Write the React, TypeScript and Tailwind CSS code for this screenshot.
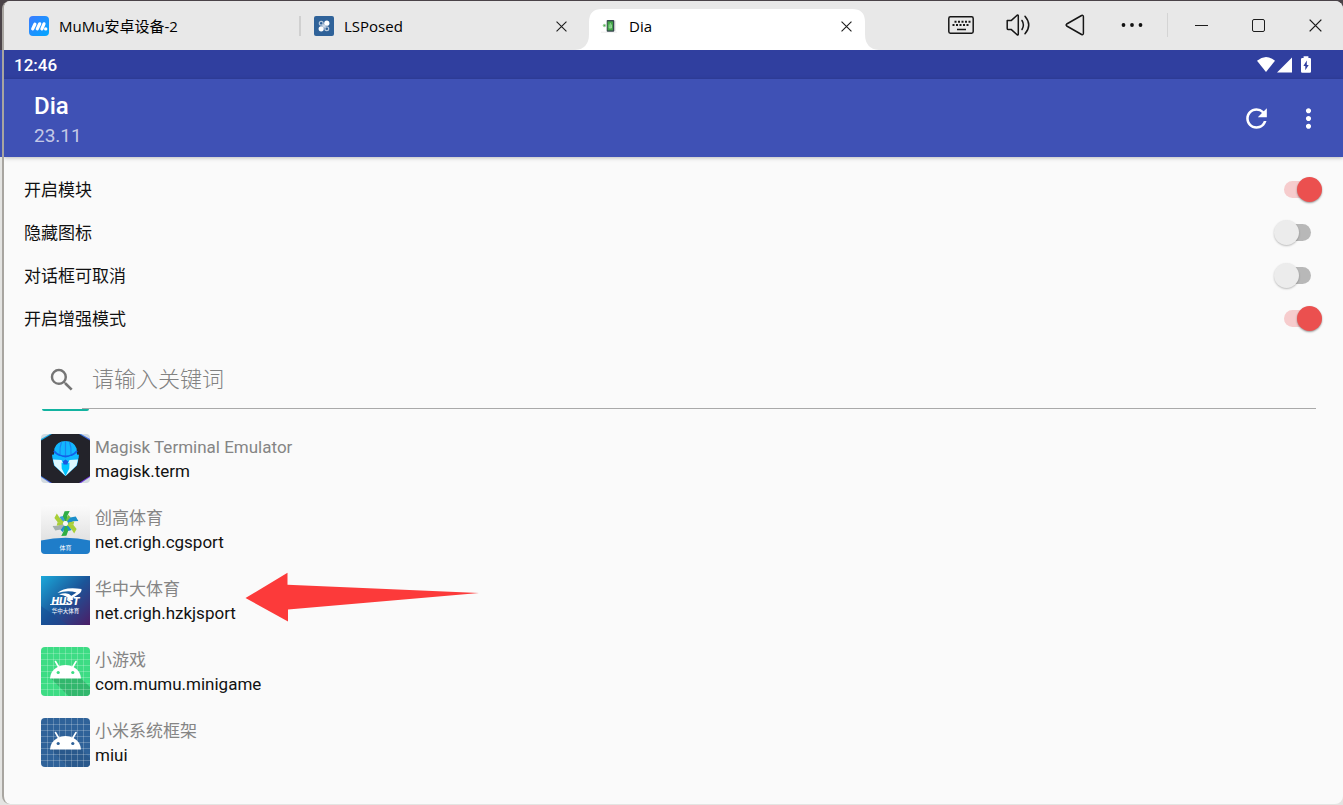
import { useState } from "react";
import type { ReactNode } from "react";
import { MdMoreVert, MdRefresh, MdSearch } from "react-icons/md";

function MuMuLogo() {
  return (
    <svg viewBox="0 0 20 20" className="size-5 shrink-0" aria-hidden="true">
      <defs>
        <linearGradient id="mumu" x1="0" y1="0" x2="1" y2="1">
          <stop offset="0" stopColor="#3d7bff" />
          <stop offset="1" stopColor="#00a8ff" />
        </linearGradient>
      </defs>
      <rect width="20" height="20" rx="4" fill="url(#mumu)" />
      <path d="M3.7 12.9 5.9 8.2M8.3 12.9 10.700 7.8M12.900 12.900 15 7.800" stroke="#fff" strokeWidth="3.200" strokeLinecap="round" />
      <circle cx="16.700" cy="12.900" r="1.700" fill="#fff" />
    </svg>
  );
}

function LSPosedLogo() {
  return (
    <svg viewBox="0 0 20 20" className="size-5 shrink-0" aria-hidden="true">
      <rect width="20" height="20" rx="2" fill="#2f6299" />
      <circle cx="7.200" cy="7.200" r="1.900" fill="#2f6299" stroke="#b9cadd" strokeWidth="1.200" />
      <circle cx="12.800" cy="12.800" r="1.900" fill="#2f6299" stroke="#b9cadd" strokeWidth="1.200" />
      <circle cx="7.200" cy="12.800" r="2.600" fill="#fff" />
      <circle cx="12.800" cy="7.200" r="2.600" fill="#fff" />
      <path d="M7.700 10 10 7.700 12.300 10 10 12.300z" fill="#ccd8e5" />
    </svg>
  );
}

function DiaLogo() {
  return (
    <svg viewBox="0 0 20 20" className="size-5 shrink-0" aria-hidden="true">
      <rect x="2" y="15.600" width="16" height="1.400" fill="#f3f3f3" />
      <circle cx="5.400" cy="9.500" r="1.700" fill="#a5d6a7" />
      <circle cx="5.400" cy="9.500" r=".7" fill="#4caf50" />
      <path d="M15 4.500h1.600v10.800h-1.600z" fill="#dedede" />
      <rect x="7.700" y="4" width="7.500" height="11.700" rx=".8" fill="#37474f" />
      <rect x="8.600" y="5.400" width="5.300" height="9" fill="#43a847" />
      <path d="M11.300 7v5M10.200 8.500v3.500h2.300V8.500" stroke="#a5e0a8" strokeWidth=".8" fill="none" />
    </svg>
  );
}

function Cross({ className }: { className: string }) {
  return (
    <svg viewBox="0 0 12 12" className={className} fill="none" stroke="#1d1d1d" strokeWidth="1.2" aria-hidden="true">
      <path d="M.6.6 11.4 11.4M11.4.6.6 11.4" />
    </svg>
  );
}

function KeyboardIcon() {
  return (
    <svg viewBox="0 0 26 18" className="h-[18px] w-[26px]" fill="none" stroke="#161616" aria-hidden="true">
      <rect x=".8" y=".8" width="24.4" height="16.4" rx="1.6" strokeWidth="1.5" />
      <path d="M6.500 5.700h16.500M4.500 9h16.500" strokeWidth="1.900" strokeDasharray="2 1.500" />
      <path d="M9 13.500h9" strokeWidth="1.500" />
    </svg>
  );
}

function SpeakerIcon() {
  return (
    <svg viewBox="0 0 24 22" className="h-[22px] w-6" fill="none" stroke="#161616" strokeWidth="1.5" strokeLinejoin="round" strokeLinecap="round" aria-hidden="true">
      <path d="M1.200 6.600h3.900l6-5.400q1.200-.6 1.200.7v18.200q0 1.300-1.200.7l-6-5.400H2q-.8 0-.8-.8z" />
      <path d="M16 6.500q2.800 4.500 0 9M19 2.200q7.500 8.800 0 17.600" />
    </svg>
  );
}

function BackIcon() {
  return (
    <svg viewBox="0 0 20 22" className="h-[22px] w-5" fill="none" stroke="#161616" strokeWidth="1.5" strokeLinejoin="round" aria-hidden="true">
      <path d="M1.7 10 16.6 1.5q1.8-.6 1.8 1.2v16.6q0 1.8-1.8 1.2L1.7 12Q.6 11 1.7 10z" />
    </svg>
  );
}

function EllipsisIcon() {
  return (
    <svg viewBox="0 0 22 6" className="h-1.5 w-[22px]" fill="#111" aria-hidden="true">
      <circle cx="2.5" cy="3" r="1.9" />
      <circle cx="11" cy="3" r="1.9" />
      <circle cx="19.5" cy="3" r="1.9" />
    </svg>
  );
}

function StatusIcons() {
  return (
    <svg viewBox="0 0 54 18" className="h-[18px] w-[54px]" fill="#fff" aria-hidden="true">
      <path d="M0 4.800Q9-2.600 18 4.800L9 16z" />
      <path d="M35 1.500V16.500H20z" />
      <path fillRule="evenodd" d="M46.600.3h4.800v1.800h1.400q1.200 0 1.200 1.200v12.200q0 1.200-1.200 1.200h-7.600q-1.200 0-1.200-1.200V3.300q0-1.200 1.200-1.200h1.400zM49.800 4.600 46.400 10h1.900v4.300L51.700 9h-1.900z" />
    </svg>
  );
}

function MagiskIcon() {
  return (
    <svg viewBox="0 0 49 49" className="size-[49px] shrink-0 rounded" aria-hidden="true">
      <defs>
        <linearGradient id="magisk-edge" x1="0" y1="0" x2="1" y2="1">
          <stop offset="0" stopColor="#12b5e8" />
          <stop offset="1" stopColor="#7a2fe0" />
        </linearGradient>
      </defs>
      <rect width="49" height="49" fill="#d3dbe0" />
      <path d="M9 0H40L49 5V43L40 49H9L0 43V5z" fill="url(#magisk-edge)" />
      <path d="M11 0H38L49 6.500V42L38 49H11L0 42V6.500z" fill="#23232a" />
      <path d="M24.500 7Q33 7 35.600 14.500l.4 6 2 .3-.8 5.200-1.200 5.500-11.500 10.500-11.500-10.500L11.800 26l-.8-5.200 2-.3.400-6Q16 7 24.500 7z" fill="#12b7ff" />
      <path d="m12 25.500 8.500.5 2 4.500L24.500 42l-11-10.500zM37 25.500l-8.500.5-2 4.500L24.500 42l11-10.500z" fill="#ddf8ff" />
      <path d="M20.500 8Q18.500 13 19 20M28.500 8Q30.500 13 30 20M24.500 7v15" stroke="#1a86f0" strokeWidth="1.200" fill="none" />
      <path d="M13 17q4 5 11.500 5.500 7.500-.5 11.500-5.500" stroke="#1260e8" strokeWidth="2" fill="none" />
      <path d="M11.800 22.500q8 .5 12.700 3.500 4.700-3 12.700-3.500" stroke="#10b8ff" strokeWidth="3" fill="none" />
      <path d="m20.500 28.500 4 2 4-2-.2 6L24.500 42l-3.800-7.500z" fill="#00c4ff" />
      <path d="m21.800 27.500 2.700-2 2.700 2-.8 3h-3.800z" fill="#1858df" />
    </svg>
  );
}

const petals = [
  { angle: 10, color: "#2fae45", tip: "#7cc142" },
  { angle: 70, color: "#1b8fcb", tip: "#a9cf38" },
  { angle: 130, color: "#a9cf38", tip: "#1b8fcb" },
  { angle: 190, color: "#2fae45", tip: "#1b8fcb" },
  { angle: 250, color: "#a3b0ae", tip: "#a9cf38" },
  { angle: 310, color: "#a9cf38", tip: "#3aa0d8" },
];

function SportIcon() {
  return (
    <svg viewBox="0 0 49 49" className="size-[49px] shrink-0 rounded" aria-hidden="true">
      <defs>
        <linearGradient id="sport-bg" x1="0" y1="0" x2="0" y2="1">
          <stop offset="0" stopColor="#fbfbfb" />
          <stop offset="1" stopColor="#d8d8d8" />
        </linearGradient>
      </defs>
      <rect width="49" height="49" fill="url(#sport-bg)" />
      <g transform="translate(24.5 18.5)">
        {petals.map((petal) => (
          <g key={petal.angle} transform={`rotate(${petal.angle})`}>
            <path d="M-1.500-2-4-6.500-3-12 2-13 .5-8 2-2.500z" fill={petal.color} />
            <path d="M0-3 2-2.500 4-7 1-9z" fill={petal.tip} />
          </g>
        ))}
        <circle r="2.400" fill="#f7f7f7" />
      </g>
      <path d="M0 35.500Q24.500 30 49 35.500V49H0z" fill="#1f7dc9" />
      <text x="24.500" y="44.500" textAnchor="middle" fontSize="6" fill="#fff" fontFamily="Noto Sans CJK SC, sans-serif">体育</text>
    </svg>
  );
}

function HustIcon() {
  return (
    <svg viewBox="0 0 49 49" className="size-[49px] shrink-0" aria-hidden="true">
      <defs>
        <linearGradient id="hust" x1="0" y1="0" x2="1" y2="1">
          <stop offset="0" stopColor="#1ba9da" />
          <stop offset=".5" stopColor="#1b5599" />
          <stop offset="1" stopColor="#4c1d66" />
        </linearGradient>
      </defs>
      <rect width="49" height="49" fill="url(#hust)" />
      <path d="M0 30 27 49H0z" fill="#164b92" opacity=".45" />
      <path d="M16.500 17Q23 10.500 40.500 13q.500 3-3.500 5.500L28.500 24l-1-2.200 8-5.300q-9-2.500-19 .5z" fill="#fff" />
      <path d="M18 18.500q9-3 12.500 1.500l1.500 4-3.500.5q-1.500-5-10.500-6z" fill="#fff" />
      <text x="10.500" y="28.500" fontSize="11" fontWeight="900" fontStyle="italic" fill="#fff" fontFamily="Roboto, sans-serif">HUST</text>
      <path d="M9 28.500h19" stroke="#fff" strokeWidth=".9" />
      <text x="24.500" y="37" textAnchor="middle" fontSize="5.500" fontWeight="500" fill="#e6edf7" fontFamily="Noto Sans CJK SC, sans-serif">华中大体育</text>
    </svg>
  );
}

function RobotIcon({ background, shade }: { background: string; shade: string }) {
  return (
    <svg viewBox="0 0 49 49" className="size-[49px] shrink-0 rounded" aria-hidden="true">
      <rect width="49" height="49" fill={background} />
      <path d="M9.500 31H39.500L49 40V49H27.500z" fill={shade} />
      <path d="M6.500 0v49M12.500 0v49M18.500 0v49M24.500 0v49M30.500 0v49M36.500 0v49M42.500 0v49M0 6.500h49M0 12.500h49M0 18.500h49M0 24.500h49M0 30.500h49M0 36.500h49M0 42.500h49" stroke="#fff" strokeOpacity=".25" strokeWidth=".9" />
      <path d="M14.500 14.500 18 20.500M35 14.500 31.500 20.500" stroke="#fff" strokeWidth="1.600" strokeLinecap="round" />
      <path d="M9 31.500Q9.500 23.500 17 19.700q7.500-3.500 15 0 7.500 3.800 8 11.800z" fill="#fff" />
      <circle cx="17.200" cy="25.500" r="1.600" fill={background} />
      <circle cx="31.800" cy="25.500" r="1.600" fill={background} />
    </svg>
  );
}

function Tab({ icon, label, active, closable }: { icon: ReactNode; label: string; active?: boolean; closable?: boolean }) {
  return (
    <div className="relative flex h-full w-[285px] min-w-0 items-end">
      {active && (
        <svg viewBox="0 0 304 41" preserveAspectRatio="none" className="absolute bottom-0 -left-2.5 h-[41px] w-[304px]" fill="#fff" aria-hidden="true">
          <path d="M0 41Q14 40 14 25V13Q14 0 27 0H277Q290 0 290 13V25Q290 40 304 41z" />
        </svg>
      )}
      <div className="relative flex h-12 w-full items-center pr-4 pl-3.5">
        <button type="button" className="flex min-w-0 grow items-center gap-2.5 text-left">
          {icon}
          <span className="truncate">{label}</span>
        </button>
        {closable && (
          <button type="button" aria-label={`关闭 ${label}`} className="flex size-4 items-center justify-center">
            <Cross className="size-[11px]" />
          </button>
        )}
      </div>
    </div>
  );
}

function WindowButton({ label, children }: { label: string; children: ReactNode }) {
  return (
    <button type="button" aria-label={label} className="flex h-full w-[57px] items-center justify-center">
      {children}
    </button>
  );
}

function SettingRow({ label, initial }: { label: string; initial: boolean }) {
  const [on, setOn] = useState(initial);
  return (
    <label className="flex h-[43px] items-center justify-between">
      <span>{label}</span>
      <span className="relative h-[25px] w-[49px]">
        <input type="checkbox" checked={on} onChange={() => setOn(!on)} className="peer absolute inset-0 opacity-0" />
        <span className="absolute top-1 left-[11px] h-[17px] w-[27px] rounded-full bg-[#b8b8b8] peer-checked:bg-[#f6cccd]" />
        <span className="absolute top-0 left-px size-[25px] rounded-full bg-[#ececec] shadow-[0_1px_2px_rgba(0,0,0,0.25)] peer-checked:left-6 peer-checked:bg-[#eb504f] peer-checked:shadow-[0_1px_2px_rgba(0,0,0,0.4)]" />
      </span>
    </label>
  );
}

const settings = [
  { label: "开启模块", on: true },
  { label: "隐藏图标", on: false },
  { label: "对话框可取消", on: false },
  { label: "开启增强模式", on: true },
];

const apps = [
  { name: "Magisk Terminal Emulator", id: "magisk.term", icon: <MagiskIcon /> },
  { name: "创高体育", id: "net.crigh.cgsport", icon: <SportIcon /> },
  { name: "华中大体育", id: "net.crigh.hzkjsport", icon: <HustIcon />, marked: true },
  { name: "小游戏", id: "com.mumu.minigame", icon: <RobotIcon background="#3ddc84" shade="#32b76d" /> },
  { name: "小米系统框架", id: "miui", icon: <RobotIcon background="#2f6299" shade="#2a598c" /> },
];

export default function App() {
  return (
    <div className="flex min-h-screen bg-[linear-gradient(#4a4348_0_50px,#3f51b5_50px_157px,#e4e4e2_157px)] pt-px pb-px pl-[2px]">
      <div className="flex min-w-0 grow flex-col overflow-hidden rounded-lg border-l-2 border-[#a8a5a0] bg-[#fafafa] font-['Roboto','Noto_Sans_CJK_SC',sans-serif] text-[17px] text-[#111]">
        <header className="flex h-[49px] items-stretch justify-between bg-[#e8e8e8] font-['Open_Sans','Noto_Sans_CJK_SC',sans-serif] text-[15px] text-black">
          <nav className="flex min-w-0 pl-[11px]">
            <Tab icon={<MuMuLogo />} label="MuMu安卓设备-2" />
            <div className="relative">
              <span className="absolute top-[15px] -right-px h-5 w-0.5 bg-[#d0d0d0]" />
            </div>
            <Tab icon={<LSPosedLogo />} label="LSPosed" closable />
            <Tab icon={<DiaLogo />} label="Dia" active closable />
          </nav>
          <div className="flex h-12 shrink-0 items-center">
            <WindowButton label="键盘"><KeyboardIcon /></WindowButton>
            <WindowButton label="音量"><SpeakerIcon /></WindowButton>
            <WindowButton label="返回"><BackIcon /></WindowButton>
            <WindowButton label="更多"><EllipsisIcon /></WindowButton>
            <span className="mr-[5px] ml-[7px] h-6 w-px bg-[#d4d4d4]" />
            <WindowButton label="最小化"><span className="h-px w-[13px] bg-[#1d1d1d]" /></WindowButton>
            <WindowButton label="最大化"><span className="size-[13px] rounded-[2px] border border-[#1d1d1d]" /></WindowButton>
            <button type="button" aria-label="关闭" className="flex h-full w-14 items-center justify-center">
              <Cross className="size-[13px]" />
            </button>
          </div>
        </header>

        <div className="flex h-[29px] items-center justify-between bg-[#303f9f] pr-8 pl-2.5 font-medium text-white">
          <span className="pt-0.5">12:46</span>
          <StatusIcons />
        </div>

        <div className="relative flex h-[78px] items-center justify-between bg-[#3f51b5] pr-[19px] pl-[30px] text-white shadow-[0_1px_4px_rgba(0,0,0,0.25)]">
          <div className="pt-1.5">
            <h1 className="text-2xl leading-[30px] font-medium">Dia</h1>
            <p className="text-[19px] leading-[30px] text-white/70">23.11</p>
          </div>
          <div className="flex items-center gap-[21px]">
            <button type="button" aria-label="刷新"><MdRefresh className="size-[31px]" /></button>
            <button type="button" aria-label="菜单"><MdMoreVert className="size-[31px]" /></button>
          </div>
        </div>

        <section className="pt-[11px] pr-[21px] pl-5 leading-6">
          {settings.map((item) => (
            <SettingRow key={item.label} label={item.label} initial={item.on} />
          ))}
        </section>

        <section className="pr-[27px] pl-[37px]">
          <div className="flex h-[69px] items-stretch">
            <label htmlFor="keyword" aria-label="搜索" className="flex w-[41px] items-center pt-2.5 pl-1.5">
              <MdSearch className="size-[30px] text-[#757575]" />
            </label>
            <input
              id="keyword"
              type="text"
              placeholder="请输入关键词"
              className="min-w-0 grow border-b border-[#a9a9a9] pt-2.5 pl-2.5 text-[22px] font-light outline-none placeholder:text-[#828282]"
            />
          </div>
          <div className="ml-px h-0.5 w-[47px] rounded-b bg-[#12b3a0]" />
          <ul className="flex flex-col gap-[22px] pt-[23px] pb-9">
            {apps.map((app) => (
              <li key={app.id} className="relative flex items-center gap-[5px]">
                {app.icon}
                <div className="leading-6">
                  <p className="text-[#858585]">{app.name}</p>
                  <p>{app.id}</p>
                </div>
                {app.marked && (
                  <svg viewBox="0 0 234 50" className="absolute -top-1 left-[204px] h-[50px] w-[234px]" fill="#fc3a3a" aria-hidden="true">
                    <path d="M.5 26 42.500.8V12.800L234 21 43 37.500V49.500z" />
                  </svg>
                )}
              </li>
            ))}
          </ul>
        </section>
      </div>
    </div>
  );
}
